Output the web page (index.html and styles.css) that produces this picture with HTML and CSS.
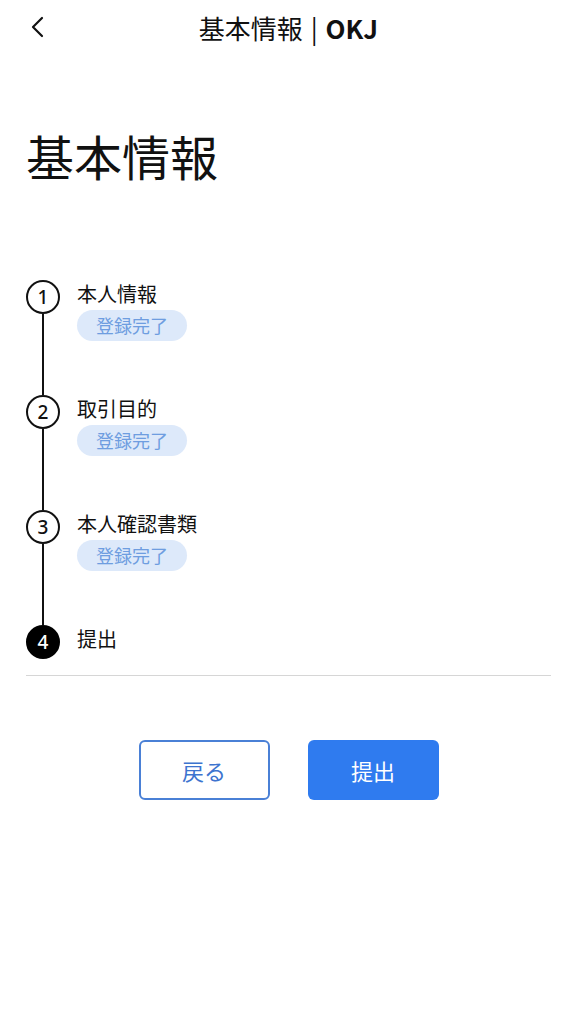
FILE: index.html
```html
<!DOCTYPE html>
<html lang="ja">
<head>
<meta charset="utf-8">
<link rel="stylesheet" href="styles.css">
</head>
<body>
<header class="topbar">
  <span class="back">
    <svg width="16" height="24" viewBox="0 0 16 24"><path d="M12 3 L3 12 L12 21" fill="none" stroke="#111" stroke-width="2.2" stroke-linecap="round" stroke-linejoin="round"/></svg>
  </span>
  <h1 class="topbar-title">基本情報 | <span class="brand">OKJ</span></h1>
</header>
<main class="page">
  <h2 class="page-title">基本情報</h2>
  <ol class="steps">
    <li class="step">
      <div class="rail"><span class="num">1</span><span class="line"></span></div>
      <div class="body"><div class="label">本人情報</div><span class="badge">登録完了</span></div>
    </li>
    <li class="step">
      <div class="rail"><span class="num">2</span><span class="line"></span></div>
      <div class="body"><div class="label">取引目的</div><span class="badge">登録完了</span></div>
    </li>
    <li class="step">
      <div class="rail"><span class="num">3</span><span class="line"></span></div>
      <div class="body"><div class="label">本人確認書類</div><span class="badge">登録完了</span></div>
    </li>
    <li class="step last">
      <div class="rail"><span class="num active">4</span></div>
      <div class="body"><div class="label">提出</div></div>
    </li>
  </ol>
  <hr class="divider">
  <div class="actions">
    <button class="btn btn-outline">戻る</button>
    <button class="btn btn-primary">提出</button>
  </div>
</main>
</body>
</html>
```
FILE: styles.css
```css
* { box-sizing: border-box; }
body {
  margin: 0;
  font-family: "Noto Sans CJK JP", "Noto Sans", sans-serif;
  color: #111;
  background: #fff;
}
.topbar {
  position: relative;
  height: 56px;
  display: flex;
  align-items: center;
  justify-content: center;
}
.back {
  position: absolute;
  left: 30px;
  top: 15px;
  display: flex;
}
.topbar-title {
  margin: 0;
  font-size: 26px;
  font-weight: 400;
  line-height: 1;
  word-spacing: 2px;
}
.brand {
  font-weight: 600;
}
.page {
  padding: 0 26px;
}
.page-title {
  margin: 65px 0 0 0;
  font-size: 48px;
  font-weight: 400;
  line-height: 68px;
}
.steps {
  list-style: none;
  margin: 91px 0 0 0;
  padding: 0;
}
.step {
  display: flex;
  min-height: 115px;
}
.step.last {
  min-height: 0;
}
.rail {
  width: 34px;
  display: flex;
  flex-direction: column;
  align-items: center;
}
.num {
  width: 34px;
  height: 34px;
  border: 2px solid #111;
  border-radius: 50%;
  display: flex;
  align-items: center;
  justify-content: center;
  font-size: 19px;
  font-weight: 500;
  line-height: 1;
  font-family: "Noto Sans", sans-serif;
}
.num.active {
  background: #000;
  color: #fff;
  border-color: #000;
}
.line {
  flex: 1;
  width: 2px;
  background: #111;
}
.body {
  padding-left: 17px;
  display: flex;
  flex-direction: column;
  align-items: flex-start;
}
.label {
  font-size: 20px;
  line-height: 30px;
  margin-top: -1px;
}
.badge {
  margin-top: 1px;
  height: 31px;
  padding: 0 19px;
  border-radius: 16px;
  background: #dde9fa;
  color: #6e9de0;
  font-size: 18px;
  line-height: 31px;
}
.divider {
  margin: 16px 0 0 0;
  border: 0;
  height: 1px;
  background: #d6d6d6;
}
.actions {
  display: flex;
  justify-content: center;
  gap: 38px;
  margin-top: 64px;
}
.btn {
  width: 131px;
  height: 60px;
  border-radius: 6px;
  font-family: "Noto Sans CJK JP", sans-serif;
  font-size: 22px;
  cursor: pointer;
}
.btn-outline {
  background: #fff;
  border: 2px solid #4a80d6;
  color: #3d74cf;
}
.btn-primary {
  background: #2f7bef;
  border: 0;
  color: #fff;
}
```
